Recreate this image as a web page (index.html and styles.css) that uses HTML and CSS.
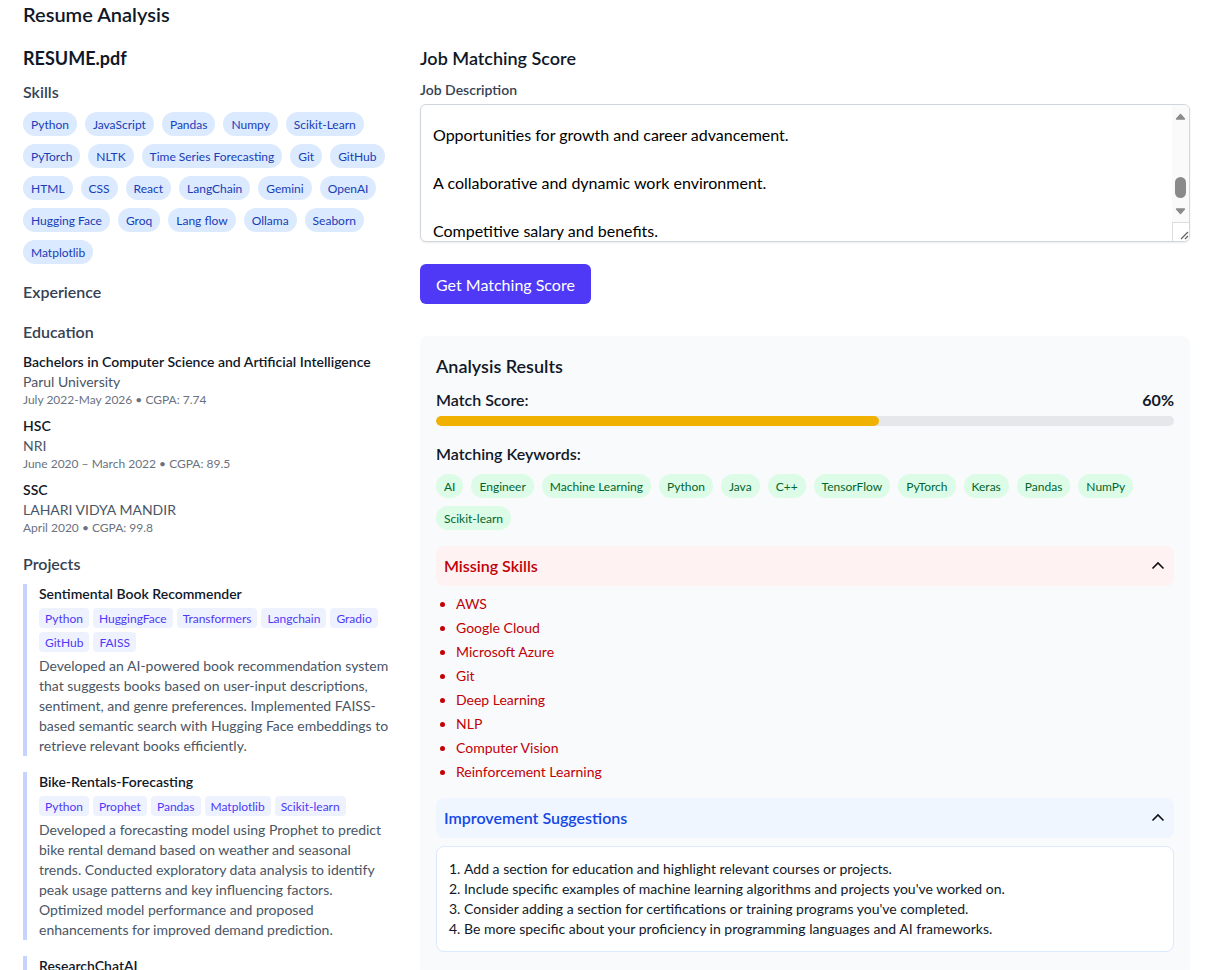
FILE: index.html
```html
<!DOCTYPE html>
<html lang="en">
<head>
<meta charset="utf-8">
<title>Resume Analysis</title>
<link rel="stylesheet" href="styles.css">
</head>
<body>
<div class="page">
  <h1 class="page-title">Resume Analysis</h1>
  <div class="layout">
    <section class="resume">
      <h2 class="file-name">RESUME.pdf</h2>
      <div class="blocks">
        <div class="block">
          <h3 class="block-title">Skills</h3>
          <div class="chips">
            <span class="chip chip-blue">Python</span>
            <span class="chip chip-blue">JavaScript</span>
            <span class="chip chip-blue">Pandas</span>
            <span class="chip chip-blue">Numpy</span>
            <span class="chip chip-blue">Scikit-Learn</span>
            <span class="chip chip-blue">PyTorch</span>
            <span class="chip chip-blue">NLTK</span>
            <span class="chip chip-blue">Time Series Forecasting</span>
            <span class="chip chip-blue">Git</span>
            <span class="chip chip-blue">GitHub</span>
            <span class="chip chip-blue">HTML</span>
            <span class="chip chip-blue">CSS</span>
            <span class="chip chip-blue">React</span>
            <span class="chip chip-blue">LangChain</span>
            <span class="chip chip-blue">Gemini</span>
            <span class="chip chip-blue">OpenAI</span>
            <span class="chip chip-blue">Hugging Face</span>
            <span class="chip chip-blue">Groq</span>
            <span class="chip chip-blue">Lang flow</span>
            <span class="chip chip-blue">Ollama</span>
            <span class="chip chip-blue">Seaborn</span>
            <span class="chip chip-blue">Matplotlib</span>
          </div>
        </div>
        <div class="block">
          <h3 class="block-title block-title-solo">Experience</h3>
        </div>
        <div class="block">
          <h3 class="block-title">Education</h3>
          <div class="edu-list">
            <div class="edu">
              <div class="edu-degree">Bachelors in Computer Science and Artificial Intelligence</div>
              <div class="edu-school">Parul University</div>
              <div class="edu-meta">July 2022-May 2026 • CGPA: 7.74</div>
            </div>
            <div class="edu">
              <div class="edu-degree">HSC</div>
              <div class="edu-school">NRI</div>
              <div class="edu-meta">June 2020 – March 2022 • CGPA: 89.5</div>
            </div>
            <div class="edu">
              <div class="edu-degree">SSC</div>
              <div class="edu-school">LAHARI VIDYA MANDIR</div>
              <div class="edu-meta">April 2020 • CGPA: 99.8</div>
            </div>
          </div>
        </div>
        <div class="block">
          <h3 class="block-title">Projects</h3>
          <div class="projects">
            <article class="project">
              <div class="project-title">Sentimental Book Recommender</div>
              <div class="tags">
                <span class="tag">Python</span>
                <span class="tag">HuggingFace</span>
                <span class="tag">Transformers</span>
                <span class="tag">Langchain</span>
                <span class="tag">Gradio</span>
                <span class="tag">GitHub</span>
                <span class="tag">FAISS</span>
              </div>
              <p class="project-desc">Developed an AI-powered book recommendation system that suggests books based on user-input descriptions, sentiment, and genre preferences. Implemented FAISS-based semantic search with Hugging Face embeddings to retrieve relevant books efficiently.</p>
            </article>
            <article class="project">
              <div class="project-title">Bike-Rentals-Forecasting</div>
              <div class="tags">
                <span class="tag">Python</span>
                <span class="tag">Prophet</span>
                <span class="tag">Pandas</span>
                <span class="tag">Matplotlib</span>
                <span class="tag">Scikit-learn</span>
              </div>
              <p class="project-desc">Developed a forecasting model using Prophet to predict bike rental demand based on weather and seasonal trends. Conducted exploratory data analysis to identify peak usage patterns and key influencing factors. Optimized model performance and proposed enhancements for improved demand prediction.</p>
            </article>
            <article class="project">
              <div class="project-title">ResearchChatAI</div>
              <div class="tags">
                <span class="tag">Python</span>
                <span class="tag">Langchain</span>
                <span class="tag">Streamlit</span>
              </div>
              <p class="project-desc">Built a conversational research assistant that answers questions over uploaded papers.</p>
            </article>
          </div>
        </div>
      </div>
    </section>

    <section class="matcher">
      <h2 class="section-title">Job Matching Score</h2>
      <label class="field-label">Job Description</label>
      <div class="jd-box">
        <div class="jd-text">Opportunities for growth and career advancement.

A collaborative and dynamic work environment.

Competitive salary and benefits.</div>
        <div class="jd-scroll">
          <div class="sb-arrow">
            <svg width="11" height="7" viewBox="0 0 11 7"><polygon points="1.5,6 5.5,1.5 9.5,6" fill="#8a8a8a" stroke="#8a8a8a" stroke-width="1.4" stroke-linejoin="round"/></svg>
          </div>
          <div class="sb-track"><div class="sb-thumb"></div></div>
          <div class="sb-arrow">
            <svg width="11" height="7" viewBox="0 0 11 7"><polygon points="1.5,1 5.5,5.5 9.5,1" fill="#8a8a8a" stroke="#8a8a8a" stroke-width="1.4" stroke-linejoin="round"/></svg>
          </div>
          <div class="sb-corner">
            <svg width="17" height="18" viewBox="0 0 17 18"><path d="M15 9 L8 16 M15 13 L12 16" stroke="#5f5f5f" stroke-width="1.2" fill="none"/></svg>
          </div>
        </div>
      </div>
      <button class="primary-btn" type="button">Get Matching Score</button>

      <div class="results">
        <h3 class="results-title">Analysis Results</h3>
        <div class="score-row">
          <span>Match Score:</span>
          <span class="score-value">60%</span>
        </div>
        <div class="bar"><div class="bar-fill" style="width:60%"></div></div>

        <h4 class="sub-title">Matching Keywords:</h4>
        <div class="chips">
          <span class="chip chip-green">AI</span>
          <span class="chip chip-green">Engineer</span>
          <span class="chip chip-green">Machine Learning</span>
          <span class="chip chip-green">Python</span>
          <span class="chip chip-green">Java</span>
          <span class="chip chip-green">C++</span>
          <span class="chip chip-green">TensorFlow</span>
          <span class="chip chip-green">PyTorch</span>
          <span class="chip chip-green">Keras</span>
          <span class="chip chip-green">Pandas</span>
          <span class="chip chip-green">NumPy</span>
          <span class="chip chip-green">Scikit-learn</span>
        </div>

        <div class="acc-head acc-red">
          <span>Missing Skills</span>
          <svg class="chev" width="16" height="16" viewBox="0 0 16 16"><path d="M2.5 10.5 L8 5 L13.5 10.5" fill="none" stroke="#111" stroke-width="1.6"/></svg>
        </div>
        <ul class="missing">
          <li>AWS</li>
          <li>Google Cloud</li>
          <li>Microsoft Azure</li>
          <li>Git</li>
          <li>Deep Learning</li>
          <li>NLP</li>
          <li>Computer Vision</li>
          <li>Reinforcement Learning</li>
        </ul>

        <div class="acc-head acc-blue">
          <span>Improvement Suggestions</span>
          <svg class="chev" width="16" height="16" viewBox="0 0 16 16"><path d="M2.5 10.5 L8 5 L13.5 10.5" fill="none" stroke="#111" stroke-width="1.6"/></svg>
        </div>
        <div class="suggest-box">
          <ol class="suggestions">
            <li>Add a section for education and highlight relevant courses or projects.</li>
            <li>Include specific examples of machine learning algorithms and projects you've worked on.</li>
            <li>Consider adding a section for certifications or training programs you've completed.</li>
            <li>Be more specific about your proficiency in programming languages and AI frameworks.</li>
          </ol>
        </div>
      </div>
    </section>
  </div>
</div>
</body>
</html>
```

FILE: styles.css
```css
html {
  scrollbar-width: none;
}

body {
  margin: 0;
  font-family: "Segoe UI", Lato, "Noto Sans", sans-serif;
  color: #101828;
  background: #fff;
}

.page {
  padding: 0 23px;
}

.page-title {
  margin: 0 0 16px;
  font-size: 20px;
  line-height: 28px;
  font-weight: 600;
}

.layout {
  display: grid;
  grid-template-columns: repeat(3, 1fr);
  column-gap: 24px;
  align-items: start;
}

.resume {
  grid-column: span 1;
}

.matcher {
  grid-column: span 2;
}

.file-name {
  margin: 0 0 8px;
  font-size: 18px;
  line-height: 28px;
  font-weight: 700;
}

.blocks {
  display: flex;
  flex-direction: column;
  gap: 16px;
}

.block-title {
  margin: 0 0 8px;
  font-size: 16px;
  line-height: 24px;
  font-weight: 600;
  color: #364153;
}

.block-title-solo {
  margin-bottom: 0;
}

.chips {
  display: flex;
  flex-wrap: wrap;
  gap: 8px;
}

.chip {
  display: inline-flex;
  align-items: center;
  height: 24px;
  padding: 0 8px;
  border-radius: 999px;
  font-size: 12px;
}

.chip-blue {
  background: #dbeafe;
  color: #193cb8;
}

.chip-green {
  background: #dcfce7;
  color: #016630;
}

.edu-list {
  display: flex;
  flex-direction: column;
  gap: 8px;
}

.edu-degree {
  font-size: 14px;
  line-height: 20px;
  font-weight: 600;
}

.edu-school {
  font-size: 14px;
  line-height: 20px;
  color: #4a5565;
}

.edu-meta {
  font-size: 12px;
  line-height: 16px;
  color: #6a7282;
}

.projects {
  display: flex;
  flex-direction: column;
  gap: 16px;
}

.project {
  border-left: 4px solid #c6d2ff;
  padding-left: 12px;
}

.project-title {
  font-size: 14px;
  line-height: 20px;
  font-weight: 600;
  margin-bottom: 4px;
}

.tags {
  display: flex;
  flex-wrap: wrap;
  gap: 4px;
  margin-bottom: 4px;
}

.tag {
  display: inline-flex;
  align-items: center;
  height: 20px;
  padding: 0 6px;
  border-radius: 4px;
  background: #eef2ff;
  color: #4f39f6;
  font-size: 12px;
}

.project-desc {
  margin: 0;
  font-size: 14px;
  line-height: 20px;
  color: #4a5565;
}

/* Right column */
.section-title {
  margin: 0 0 8px;
  font-size: 18px;
  line-height: 28px;
  font-weight: 600;
}

.field-label {
  display: block;
  margin-bottom: 4px;
  font-size: 14px;
  line-height: 20px;
  font-weight: 600;
  color: #364153;
}

.jd-box {
  display: flex;
  height: 138px;
  box-sizing: border-box;
  border: 1px solid #d1d5dc;
  border-radius: 6px;
  box-shadow: 0 1px 2px rgba(0, 0, 0, 0.08);
  overflow: hidden;
  background: #fff;
  margin-bottom: 22px;
}

.jd-text {
  flex: 1;
  padding: 18px 12px 0;
  font-size: 16px;
  line-height: 24px;
  color: #000;
  white-space: pre-line;
  overflow: hidden;
}

.jd-scroll {
  width: 17px;
  display: flex;
  flex-direction: column;
  background: #fafafa;
}

.sb-arrow {
  height: 22px;
  display: flex;
  align-items: center;
  justify-content: center;
}

.sb-track {
  flex: 1;
  display: flex;
  justify-content: center;
}

.sb-thumb {
  margin-top: 50px;
  width: 11px;
  height: 21px;
  border-radius: 6px;
  background: #8a8a8a;
}

.sb-corner {
  height: 18px;
  border-top: 1px solid #dcdcdc;
  border-left: 1px solid #dcdcdc;
  background: #fff;
}

.sb-corner svg {
  display: block;
}

.primary-btn {
  display: block;
  height: 40px;
  padding: 0 16px;
  border: 0;
  border-radius: 6px;
  background: #4f39f6;
  color: #fff;
  font-family: inherit;
  font-size: 16px;
  margin-bottom: 32px;
}

.results {
  background: #f9fafb;
  border-radius: 8px;
  padding: 16px 16px 24px;
}

.results-title {
  margin: 0 0 8px;
  font-size: 18px;
  line-height: 28px;
  font-weight: 600;
}

.score-row {
  display: flex;
  justify-content: space-between;
  font-size: 16px;
  line-height: 24px;
  font-weight: 600;
  margin-bottom: 4px;
}

.score-value {
  font-weight: 700;
}

.bar {
  height: 10px;
  border-radius: 999px;
  background: #e5e7eb;
  overflow: hidden;
  margin-bottom: 16px;
}

.bar-fill {
  height: 100%;
  border-radius: 999px;
  background: #f0b100;
}

.sub-title {
  margin: 0 0 8px;
  font-size: 16px;
  line-height: 24px;
  font-weight: 600;
}

.results .chips {
  margin-bottom: 16px;
}

.acc-head {
  display: flex;
  align-items: center;
  justify-content: space-between;
  padding: 8px;
  border-radius: 8px;
  font-size: 16px;
  line-height: 24px;
  font-weight: 600;
}

.acc-red {
  background: #fef2f2;
  color: #c10007;
}

.acc-blue {
  background: #eff6ff;
  color: #1447e6;
}

.chev {
  display: block;
}

.missing {
  margin: 8px 0 16px;
  padding-left: 20px;
  display: flex;
  flex-direction: column;
  gap: 4px;
  font-size: 14px;
  line-height: 20px;
  color: #c10007;
}

.suggest-box {
  margin-top: 8px;
  background: #fff;
  border: 1px solid #dbeafe;
  border-radius: 8px;
  padding: 12px;
}

.suggestions {
  margin: 0;
  padding: 0;
  list-style-position: inside;
  font-size: 14px;
  line-height: 20px;
  color: #101828;
}
```
